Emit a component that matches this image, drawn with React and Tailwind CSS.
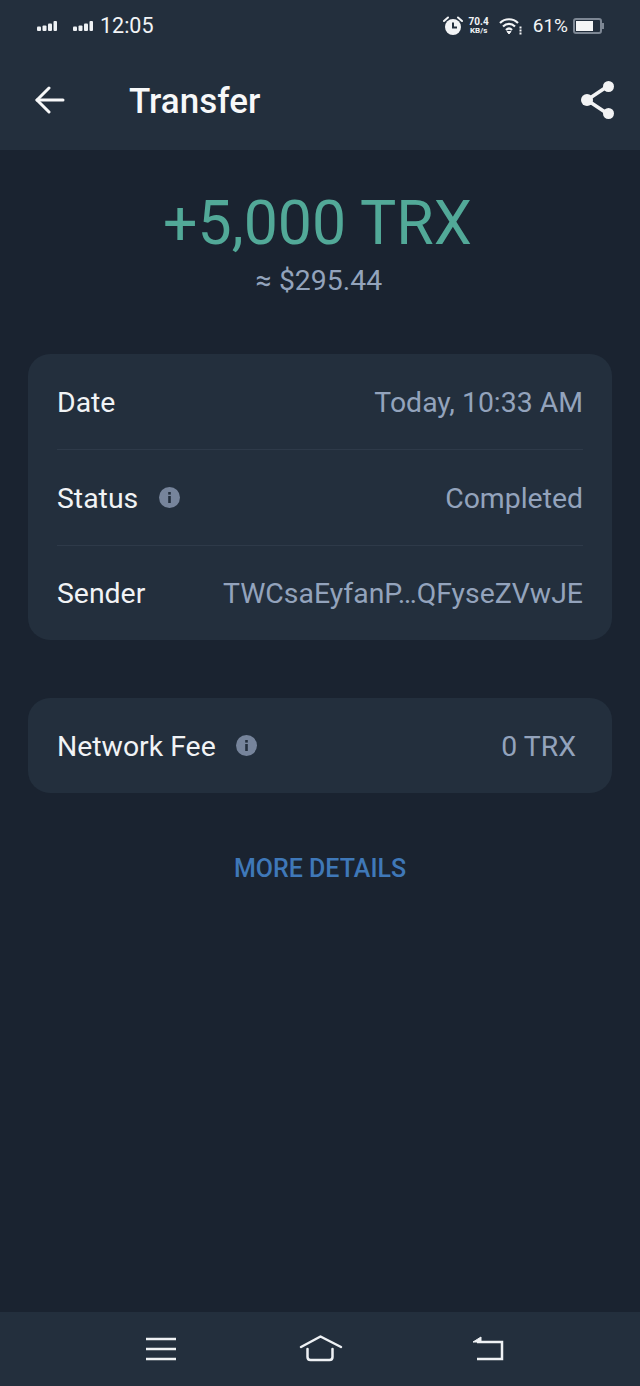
import React from 'react';

const FONT = { fontFamily: 'Roboto, sans-serif' };

const Signal = () => (
  <svg width="21" height="10" viewBox="0 0 21 10" fill="#eef1f4">
    <rect x="0" y="5.5" width="4" height="4.5" rx="1" />
    <rect x="5.5" y="4.5" width="4" height="5.5" rx="1" />
    <rect x="11" y="2.5" width="4" height="7.5" rx="1" />
    <rect x="16.5" y="0" width="3.5" height="10" rx="1" />
  </svg>
);

const Alarm = () => (
  <svg width="20" height="20" viewBox="0 0 20 20">
    <circle cx="10" cy="11" r="8" fill="#f2f4f6" />
    <path d="M10 6.5V11.5H14" fill="none" stroke="#232f3d" strokeWidth="2" />
    <path d="M1 5L5 1.5M19 5L15 1.5" stroke="#f2f4f6" strokeWidth="2" strokeLinecap="round" />
  </svg>
);

const Wifi = () => (
  <svg width="23" height="18" viewBox="0 0 23 18" fill="none" stroke="#f2f4f6" strokeWidth="2.2">
    <path d="M1 6C6 1 14 1 19 6" />
    <path d="M4 9.5C7.5 6 12.5 6 16 9.5" />
    <path d="M7 13C9 11 11 11 13 13" />
    <path d="M8 14.5L10 17L12 14.5Z" fill="#f2f4f6" strokeWidth="1" />
    <path d="M20.5 10.5H22.5M20.5 13.5H22.5M20.5 16.5H22.5" strokeWidth="1.8" />
  </svg>
);

const Battery = () => (
  <div className="flex items-center">
    <div className="w-[29px] h-[16px] rounded-[3px] border-2 border-[#7d8794] p-px">
      <div className="w-[17px] h-full bg-[#f4f5f6]" />
    </div>
    <div className="w-[2px] h-[6px] bg-[#7d8794]" />
  </div>
);

const ArrowLeft = () => (
  <svg width="30" height="28" viewBox="0 0 30 28" fill="none" stroke="#f7f8f9" strokeWidth="3" strokeLinecap="round" strokeLinejoin="round">
    <path d="M2 14H28" />
    <path d="M14 2L2 14L14 26" />
  </svg>
);

const ShareIcon = () => (
  <svg width="34" height="40" viewBox="0 0 34 40" fill="#f2f3f4" stroke="#f2f3f4">
    <path d="M6 20L27 6M6 20L27 34" strokeWidth="3.5" fill="none" />
    <circle cx="6" cy="20" r="6" strokeWidth="0" />
    <circle cx="27.5" cy="6.5" r="5.5" strokeWidth="0" />
    <circle cx="27.5" cy="33.5" r="5.5" strokeWidth="0" />
  </svg>
);

const InfoDot = () => (
  <svg className="mb-[4px]" width="21" height="21" viewBox="0 0 21 21">
    <circle cx="10.5" cy="10.5" r="10.5" fill="#76849b" />
    <rect x="9.2" y="9" width="2.6" height="7" fill="#232f3d" />
    <rect x="9.2" y="5" width="2.6" height="2.6" fill="#232f3d" />
  </svg>
);

const Row = ({ label, info, value, border }) => (
  <div className={`flex items-center justify-between ${border ? 'h-[96px] pt-[4px] border-b border-[#2e3a49]' : 'h-[94px] pt-[2px]'}`}>
    <div className="flex items-center gap-[21px] text-[28.4px] text-[#f1f3f5]">
      <span>{label}</span>
      {info && <InfoDot />}
    </div>
    <span className="text-[28.4px] text-[#93a3bc]">{value}</span>
  </div>
);

const App = () => {
  return (
    <div className="w-[640px] h-[1386px] flex flex-col bg-[#1a2330] overflow-hidden" style={FONT}>
      {/* Status + title bar */}
      <div className="h-[150px] bg-[#232f3d] flex flex-col">
        <div className="h-[52px] pl-[37px] pr-[36px] flex items-center justify-between">
          <div className="flex items-center text-[#f2f4f6]">
            <Signal />
            <div className="ml-[15px] mr-[6px]"><Signal /></div>
            <span className="text-[21.5px]">12:05</span>
          </div>
          <div className="flex items-center text-[#f2f4f6]">
            <Alarm />
            <div className="ml-[6px] flex flex-col items-center text-[10px] leading-[10px] font-bold">
              <span>70.4</span>
              <span className="text-[8px] leading-[8px]">KB/s</span>
            </div>
            <div className="ml-[10px]"><Wifi /></div>
            <span className="ml-[11px] mr-[5px] text-[19px]">61%</span>
            <Battery />
          </div>
        </div>
        <div className="flex-1 pb-[3px] pl-[35px] pr-[25px] flex items-center justify-between">
          <div className="flex items-center">
            <ArrowLeft />
            <span className="ml-[64px] mt-[6px] text-[35px] font-medium text-[#f7f8f9]">Transfer</span>
          </div>
          <ShareIcon />
        </div>
      </div>

      {/* Amount */}
      <div className="flex flex-col items-center mt-[38px]">
        <div className="pr-[5px] text-[60.8px] leading-[72px] text-[#52a998]">+5,000 TRX</div>
        <div className="pr-[2px] text-[28.4px] leading-[34px] mt-[4px] text-[#93a3bc]">≈ $295.44</div>
      </div>

      {/* Details card */}
      <div className="mx-[28px] mt-[56px] px-[29px] rounded-[22px] bg-[#232f3d]">
        <Row label="Date" value="Today, 10:33 AM" border />
        <Row label="Status" info value="Completed" border />
        <Row label="Sender" value="TWCsaEyfanP…QFyseZVwJE" />
      </div>

      {/* Fee card */}
      <div className="mx-[28px] mt-[58px] pl-[29px] pr-[36px] pt-[4px] h-[95px] rounded-[22px] bg-[#232f3d] flex items-center justify-between">
        <div className="flex items-center gap-[20px] text-[28.4px] text-[#f1f3f5]">
          <span>Network Fee</span>
          <InfoDot />
        </div>
        <span className="text-[28.4px] text-[#93a3bc]">0 TRX</span>
      </div>

      <div className="mt-[58px] text-center text-[25px] leading-[36px] font-medium text-[#3f78b8]">MORE DETAILS</div>

      {/* Nav bar */}
      <div className="mt-auto h-[74px] bg-[#232f3d] flex items-center pl-[145px] pr-[136px] justify-between">
        <svg width="32" height="26" viewBox="0 0 32 26" stroke="#eef1f4" strokeWidth="2.5">
          <path d="M1 3H31M1 13H31M1 23H31" />
        </svg>
        <svg className="mr-[7px]" width="44" height="30" viewBox="0 0 44 30" fill="none" stroke="#eef1f4" strokeWidth="2.5" strokeLinecap="round" strokeLinejoin="round">
          <path d="M2 13L21.5 2.5L42 13" />
          <path d="M8.5 15V23Q8.5 26 11.5 26H30.5Q33.5 26 33.5 23V15" />
        </svg>
        <svg width="32" height="26" viewBox="0 0 32 26" fill="none" stroke="#eef1f4" strokeWidth="2.5">
          <path d="M5 6H30V23H5" />
          <path d="M1 6L9 1V6Z" fill="#eef1f4" strokeWidth="1" />
        </svg>
      </div>
    </div>
  );
};

export default App;
